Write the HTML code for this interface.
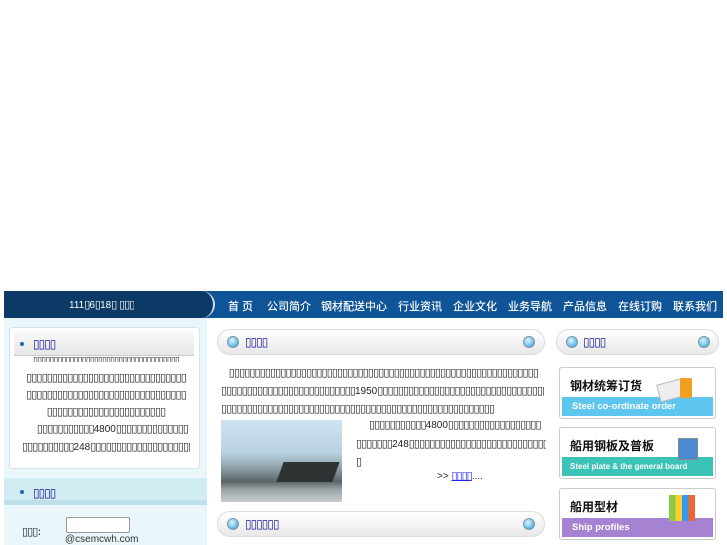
<!DOCTYPE html><html><head><meta charset="utf-8"><style>
body{margin:0;width:727px;height:545px;overflow:hidden;background:#fff;font-family:"Liberation Sans","DejaVu Sans",sans-serif;font-size:11px;color:#222;position:relative}
.a{position:absolute}
.t{font-family:"DejaVu Sans",sans-serif;font-size:11px;letter-spacing:-0.9px;white-space:nowrap;color:#222;overflow:hidden}
.t span{letter-spacing:0;font-family:"Liberation Sans",sans-serif;font-size:10px}
.hd{background:linear-gradient(#fff,#e8e8e8);border:1px solid #dcdcdc;border-radius:13px}
.dot{width:10px;height:10px;border-radius:50%;background:radial-gradient(circle at 40% 35%,#dff5ff,#6cc0e6 60%,#3a8cb8);border:1px solid #7a9aaa}
.lk{color:#1a1a9a;font-family:"DejaVu Sans",sans-serif;font-size:12px;letter-spacing:-1px}
.nav{position:absolute;left:0;top:298px}
.nav span{position:absolute;top:0;color:#fff;font-family:"Liberation Sans","Noto Sans CJK SC",sans-serif;font-size:11px;white-space:nowrap;text-shadow:0 0 0.4px #fff}
.ban{position:absolute;left:559px;width:155px;height:50px;border:1px solid #ccc;border-radius:3px;background:#fff}
.ban b{position:absolute;left:10px;top:9px;font-family:"Liberation Sans","Noto Sans CJK SC",sans-serif;font-size:12px;color:#111}
.ban i{position:absolute;left:2px;right:2px;bottom:2px;height:19px;color:#fff;font-style:normal;font-weight:bold;font-size:9.5px;line-height:19px;padding-left:10px;white-space:nowrap;overflow:hidden}
</style></head><body>
<div class="a" style="left:4px;top:291px;width:719px;height:27px;background:#0e5497"></div>
<div class="a" style="left:4px;top:291px;width:209px;height:27px;background:#0b3a66;border-radius:0 14px 14px 0;border-right:2px solid #cfe0ef"></div>
<div class="a t" style="left:69px;top:298px;color:#fff"><span>111</span>▯<span>6</span>▯<span>18</span>▯ ▯▯▯</div>
<div class="nav"><span style="left:228px">首 页</span><span style="left:267px">公司简介</span><span style="left:321px">钢材配送中心</span><span style="left:398px">行业资讯</span><span style="left:453px">企业文化</span><span style="left:508px">业务导航</span><span style="left:563px">产品信息</span><span style="left:618px">在线订购</span><span style="left:673px">联系我们</span></div>
<div class="a" style="left:4px;top:318px;width:203px;height:227px;background:#e9f7fb"></div>
<div class="a" style="left:9px;top:327px;width:189px;height:140px;background:#fff;border:1px solid #d6e4ea;border-radius:4px"></div>
<div class="a" style="left:14px;top:331px;width:180px;height:24px;background:linear-gradient(#fafafa,#e6e6e6);border-bottom:1px solid #ccc"></div>
<div class="a" style="left:20px;top:342px;width:4px;height:4px;border-radius:50%;background:#2266aa"></div>
<div class="a lk" style="left:33px;top:337px">▯▯▯▯</div>
<div class="a t" style="left:22px;top:356px;width:168px;height:6px;border-bottom:0;overflow:hidden;line-height:10px;font-size:9px;text-align:center">▯▯▯▯▯▯▯▯▯▯▯▯▯▯▯▯▯▯▯▯▯▯▯▯▯▯▯▯▯▯▯▯▯▯▯▯</div>
<div class="a t" style="left:22px;top:369px;line-height:17px;text-align:center;width:168px;height:90px">▯▯▯▯▯▯▯▯▯▯▯▯▯▯▯▯▯▯▯▯▯▯▯▯▯▯▯▯▯▯▯<br>▯▯▯▯▯▯▯▯▯▯▯▯▯▯▯▯▯▯▯▯▯▯▯▯▯▯▯▯▯▯▯<br>▯▯▯▯▯▯▯▯▯▯▯▯▯▯▯▯▯▯▯▯▯▯▯<br>&nbsp;&nbsp;&nbsp;&nbsp;&nbsp;▯▯▯▯▯▯▯▯▯▯▯<span>4800</span>▯▯▯▯▯▯▯▯▯▯▯▯▯▯<br>▯▯▯▯▯▯▯▯▯▯<span>248</span>▯▯▯▯▯▯▯▯▯▯▯▯▯▯▯▯▯▯▯▯</div>
<div class="a" style="left:4px;top:478px;width:203px;height:22px;background:#d2ecf3;border-bottom:5px solid #bfe0ea"></div>
<div class="a" style="left:20px;top:490px;width:4px;height:4px;border-radius:50%;background:#2266aa"></div>
<div class="a lk" style="left:33px;top:486px">▯▯▯▯</div>
<div class="a t" style="left:22px;top:525px">▯▯▯:</div>
<div class="a" style="left:66px;top:517px;width:62px;height:14px;border:1px solid #999;border-radius:2px;background:#fff"></div>
<div class="a" style="left:65px;top:534px;font-size:10px;color:#333">@csemcwh.com</div>
<div class="a hd" style="left:217px;top:329px;width:326px;height:24px"></div>
<div class="a dot" style="left:227px;top:336px"></div><div class="a dot" style="left:523px;top:336px"></div>
<div class="a lk" style="left:245px;top:335px">▯▯▯▯</div>
<div class="a t" style="left:221px;top:364px;line-height:17.5px;width:323px;height:54px">&nbsp;&nbsp;&nbsp;▯▯▯▯▯▯▯▯▯▯▯▯▯▯▯▯▯▯▯▯▯▯▯▯▯▯▯▯▯▯▯▯▯▯▯▯▯▯▯▯▯▯▯▯▯▯▯▯▯▯▯▯▯▯▯▯▯▯▯▯<br>▯▯▯▯▯▯▯▯▯▯▯▯▯▯▯▯▯▯▯▯▯▯▯▯▯▯<span>1950</span>▯▯▯▯▯▯▯▯▯▯▯▯▯▯▯▯▯▯▯▯▯▯▯▯▯▯▯▯▯▯▯▯▯▯▯▯<br>▯▯▯▯▯▯▯▯▯▯▯▯▯▯▯▯▯▯▯▯▯▯▯▯▯▯▯▯▯▯▯▯▯▯▯▯▯▯▯▯▯▯▯▯▯▯▯▯▯▯▯▯▯</div>
<div class="a" style="left:221px;top:420px;width:121px;height:82px;background:linear-gradient(#cfe3ef 0,#b8d2e2 40%,#8a9ca2 60%,#5a6466 75%,#9aa5a8 85%,#c7cdcf 100%)"></div>
<div class="a" style="left:280px;top:462px;width:56px;height:20px;background:#2e3434;transform:skewX(-20deg)"></div>
<div class="a t" style="left:356px;top:416px;line-height:17.5px;width:190px;height:54px">&nbsp;&nbsp;&nbsp;&nbsp;&nbsp;▯▯▯▯▯▯▯▯▯▯▯<span>4800</span>▯▯▯▯▯▯▯▯▯▯▯▯▯▯▯▯▯▯<br>▯▯▯▯▯▯▯<span>248</span>▯▯▯▯▯▯▯▯▯▯▯▯▯▯▯▯▯▯▯▯▯▯▯▯▯▯▯▯▯▯<br>▯</div>
<div class="a" style="left:437px;top:469px;font-size:10px;color:#333">&gt;&gt; <span class="lk" style="color:#2222ee;font-size:11px;text-decoration:underline">▯▯▯▯</span>....</div>
<div class="a hd" style="left:217px;top:511px;width:326px;height:24px"></div>
<div class="a dot" style="left:227px;top:518px"></div><div class="a dot" style="left:523px;top:518px"></div>
<div class="a lk" style="left:245px;top:517px">▯▯▯▯▯▯</div>
<div class="a hd" style="left:556px;top:329px;width:161px;height:24px"></div>
<div class="a dot" style="left:566px;top:336px"></div><div class="a dot" style="left:698px;top:336px"></div>
<div class="a lk" style="left:583px;top:335px">▯▯▯▯</div>
<div class="ban" style="top:367px"><b>钢材统筹订货</b><i style="background:#5ec6ee">Steel co-ordinate order</i></div>
<div class="ban" style="top:427px"><b>船用钢板及普板</b><i style="background:#3cc3b8;font-size:8px;padding-left:8px">Steel plate &amp; the general board</i></div>
<div class="ban" style="top:488px"><b>船用型材</b><i style="background:#a582d2">Ship profiles</i></div>
<div class="a" style="left:658px;top:381px;width:26px;height:16px;background:#eee;border:1px solid #bbb;transform:rotate(-15deg)"></div>
<div class="a" style="left:680px;top:378px;width:12px;height:20px;background:#f0a020;border-radius:2px"></div>
<div class="a" style="left:678px;top:438px;width:18px;height:20px;background:#4a8ad0;border:1px solid #888"></div>
<div class="a" style="left:669px;top:495px;width:26px;height:26px;background:linear-gradient(90deg,#8c4 0 25%,#fc3 25% 50%,#39e 50% 75%,#e63 75%)"></div>
</body></html>
